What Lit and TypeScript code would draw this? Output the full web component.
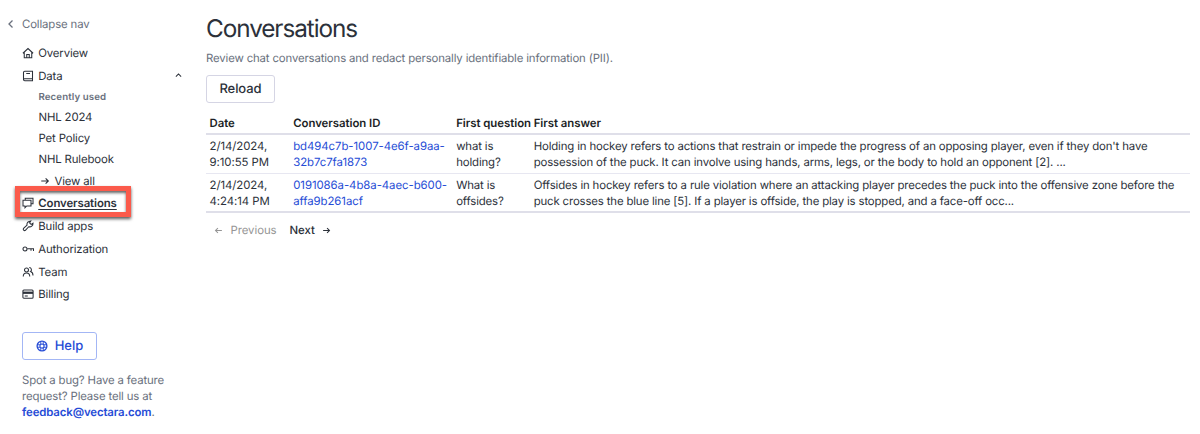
import { LitElement, html, css, svg } from "lit";
import { customElement } from "lit/decorators.js";
import { classMap } from "lit/directives/class-map.js";

const icons: Record<string, unknown> = {
  left: svg`<path d="M15 5 8 12l7 7"/>`,
  up: svg`<path d="m5 15 7-7 7 7"/>`,
  home: svg`<path d="M1.800 12.500 12 3l10.200 9.500M4.500 10.500V21.500h15V10.500M9.500 21v-6h5V21"/>`,
  book: svg`<path d="M21 17.500V2.500H5.500Q3 2.500 3 5v14q0 2.500 2.500 2.500H21v-4H5.500Q3 17.500 3 19M8.500 7h7.500"/>`,
  chat: svg`<path d="M6.500 6V2.500H22v11h-3.500M2 6.500h16V18H9.500L6 21.500V18H2z"/>`,
  wrench: svg`<path d="M14.500 3.200a6 6 0 0 1 3-1.200l-2.300 3.700 3 3L22 6.500c.3 5-4 8.200-8.600 7l-6.600 7q-1.800 1.500-3.500-.2t-.2-3.500l7-6.600c-1-3 .7-6 4.400-7z"/>`,
  key: svg`<circle cx="6" cy="12" r="4"/><path d="M10.500 11.500H23v4.500M18 12v3.500"/>`,
  team: svg`<circle cx="9" cy="8" r="4"/><path d="M2.500 21q0-7 6.500-7t6.500 7M14.500 3.200a4.400 4.400 0 0 1 2.500 8q5 1.500 5 7.800"/>`,
  card: svg`<rect x="1.800" y="4" width="20.400" height="16.500" rx="2"/><path d="M2 9.500h20" stroke-width="4.500"/><path d="M5.500 16h6"/>`,
  help: svg`<circle cx="12" cy="12" r="9.800" stroke-width="2.600"/><circle cx="12" cy="12" r="4.200"/><path d="M9.500 2.500v6M14.500 2.500v6M9.500 15.500v6M14.500 15.500v6M2.500 9.500h6M2.500 14.500h6M15.500 9.500h6M15.500 14.500h6" stroke-width="1.900"/>`,
  right: svg`<path d="M3 12h17M13.500 5.500 20 12l-6.500 6.500"/>`,
  back: svg`<path d="M21 12H4M10.500 5.500 4 12l6.500 6.500"/>`,
};

const icon = (name: string, cls = "") =>
  html`<svg class="icon ${cls}" viewBox="0 0 24 24" fill="none" stroke="currentColor">${icons[name]}</svg>`;

const mainNav = [
  ["chat", "Conversations"],
  ["wrench", "Build apps"],
  ["key", "Authorization"],
  ["team", "Team"],
  ["card", "Billing"],
];

const rows = [
  {
    date: ["2/14/2024,", "9:10:55 PM"],
    id: ["bd494c7b-1007-4e6f-a9aa-", "32b7c7fa1873"],
    question: ["what is", "holding?"],
    answer: [
      "Holding in hockey refers to actions that restrain or impede the progress of an opposing player, even if they don't have",
      "possession of the puck. It can involve using hands, arms, legs, or the body to hold an opponent [2]. ...",
    ],
  },
  {
    date: ["2/14/2024,", "4:24:14 PM"],
    id: ["0191086a-4b8a-4aec-b600-", "affa9b261acf"],
    question: ["What is", "offsides?"],
    answer: [
      "Offsides in hockey refers to a rule violation where an attacking player precedes the puck into the offensive zone before the",
      "puck crosses the blue line [5]. If a player is offside, the play is stopped, and a face-off occ...",
    ],
  },
];

const lines = (l: string[]) => html`${l[0]}<br />${l[1]}`;

@customElement("app-root")
export class AppRoot extends LitElement {
  static styles = css`
    :host {
      display: flex;
      height: 434px;
      overflow: hidden;
      background: #fff;
      color: #2c313a;
      font: 11.400px/16px Inter, sans-serif;
      letter-spacing: -0.150px;
      white-space: nowrap;
      text-rendering: geometricPrecision;
    }
    * { box-sizing: border-box; }
    .icon { width: 12px; height: 12px; stroke-width: 2.100; flex: none; }
    .bold { stroke-width: 2.600; }
    nav { width: 206px; flex: none; padding: 12.500px 0 0 22px; }
    .collapse { display: flex; align-items: center; height: 23px; margin-left: -17px; gap: 5px; color: #69707d; }
    .item { display: flex; align-items: center; gap: 4px; height: 22.750px; width: 161px; position: relative; padding-left: 0.250px; }
    .collapse + .item { margin-top: 6px; }
    .caret { width: 9px; height: 9px; margin-left: auto; margin-right: 0.500px; stroke-width: 2.800; }
    .active .label { font-weight: 600; letter-spacing: -0.100px; text-decoration: underline; text-underline-offset: 2px; text-decoration-thickness: 1px; }
    .mark {
      position: absolute; left: -7px; top: -6.200px; width: 116px; height: 31px;
      border: 5px solid #fb5a4b; z-index: 1;
      box-shadow: 0 2px 3px rgba(0,0,0,.65), inset 0 2px 3px rgba(0,0,0,.6);
    }
    .sub { padding-left: 16.500px; }
    .caption { font-size: 9.700px; letter-spacing: 0.100px; font-weight: 600; color: #69707d; height: 19.500px; line-height: 21px; }
    .leaf { height: 21.200px; line-height: 21px; }
    .all { display: flex; align-items: center; height: 21.900px; padding-left: 18px; gap: 4.500px; }
    .all .icon { width: 10px; height: 10px; stroke-width: 2.600; }
    .btn {
      display: inline-flex; align-items: center; justify-content: center; height: 28px;
      border: 1px solid #d5d5e4; border-radius: 3px; font-size: 13px; font-weight: 500;
    }
    .help { width: 75px; margin-top: 26px; color: #264cd6; border-color: #a3b6f5; gap: 7px; letter-spacing: 0; }
    .bug { margin-top: 12px; color: #69707d; }
    .bug b { color: #264cd6; font-weight: 600; letter-spacing: -0.120px; }
    main { width: 984px; padding-top: 12px; }
    h1 { margin: 0; font-size: 24.300px; line-height: 33px; font-weight: 400; font-variation-settings: "opsz" 32; letter-spacing: -1.060px; }
    .desc { margin-top: 5px; color: #69707d; }
    .reload { width: 69px; margin: 9px 0 10px; letter-spacing: -0.060px; }
    .table { border-bottom: 2px solid #dfdfe9; }
    .row { display: grid; grid-template-columns: 83.700px 163px 77.500px 1fr; padding: 2.500px 0 0 3.500px; height: 38px; }
    .row + .row { border-top: 1px solid #e7e7f1; }
    .row.head { padding-top: 2px; height: 20px; font-weight: 600; color: #1c1f26; letter-spacing: -0.040px; }
    .row.head + .row { border-top: 2px solid #dfdfe9; height: 40px; }
    .date, .link { letter-spacing: -0.060px; }
    .link { color: #264cd6; }
    .pager { display: flex; align-items: center; margin-top: 9px; padding-left: 8px; font-weight: 500; height: 16px; letter-spacing: -0.060px; }
    .pager .icon { width: 9px; height: 9px; stroke-width: 2.800; }
    .prev { display: flex; align-items: center; gap: 7.500px; color: #959595; font-weight: 400; margin-right: 13px; }
    .next { display: flex; align-items: center; gap: 7.500px; }
  `;

  render() {
    return html`
      <nav>
        <div class="collapse">${icon("left", "bold")}<span>Collapse nav</span></div>
        <div class="item">${icon("home")}<span>Overview</span></div>
        <div class="item">${icon("book")}<span>Data</span>${icon("up", "caret")}</div>
        <div class="sub caption">Recently used</div>
        <div class="sub leaf">NHL 2024</div>
        <div class="sub leaf">Pet Policy</div>
        <div class="sub leaf">NHL Rulebook</div>
        <div class="all">${icon("right")}<span>View all</span></div>
        ${mainNav.map(([i, label], n) => html`
          <div class=${classMap({ item: true, active: n === 0 })}>
            ${icon(i)}<span class="label">${label}</span>
            ${n === 0 ? html`<div class="mark"></div>` : ""}
          </div>`)}
        <div class="btn help">${icon("help")}<span>Help</span></div>
        <div class="bug">Spot a bug? Have a feature<br />request? Please tell us at<br /><b>feedback@vectara.com</b>.</div>
      </nav>
      <main>
        <h1>Conversations</h1>
        <div class="desc">Review chat conversations and redact personally identifiable information (PII).</div>
        <div class="btn reload">Reload</div>
        <div class="table">
          <div class="row head"><span>Date</span><span>Conversation ID</span><span>First question</span><span>First answer</span></div>
          ${rows.map((r) => html`
            <div class="row">
              <span class="date">${lines(r.date)}</span><span class="link">${lines(r.id)}</span>
              <span>${lines(r.question)}</span><span>${lines(r.answer)}</span>
            </div>`)}
        </div>
        <div class="pager">
          <span class="prev">${icon("back")}Previous</span>
          <span class="next">Next${icon("right")}</span>
        </div>
      </main>
    `;
  }
}
